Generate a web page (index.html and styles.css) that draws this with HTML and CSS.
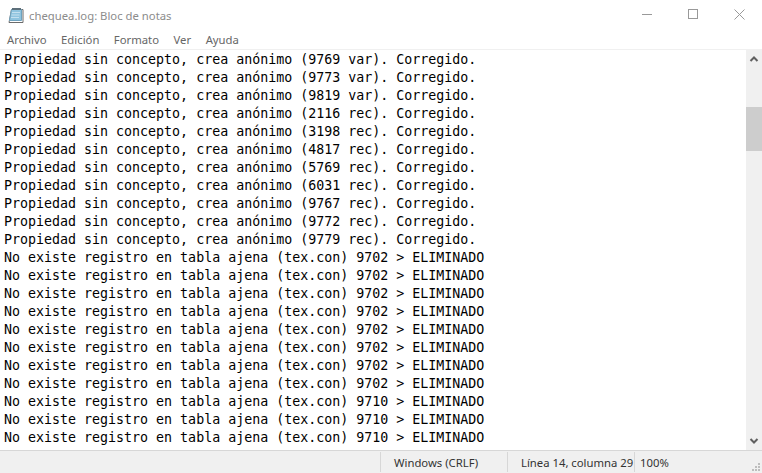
FILE: index.html
```html
<!DOCTYPE html>
<html lang="es">
<head>
<meta charset="utf-8">
<title>chequea.log: Bloc de notas</title>
<link rel="stylesheet" href="styles.css">
</head>
<body>
<div class="window">
  <header class="titlebar">
    <svg class="app-icon" width="16" height="17" viewBox="0 0 16 17">
      <path d="M3.500 2.500h11.500v13H1z" fill="#fff" stroke="#6b6b6b" stroke-width="1"/>
      <path d="M3.500 2.500h10v11H1.500z" fill="#8fc4df" stroke="#6fa3bf" stroke-width="1"/>
      <path d="M4 1h9v2H4z" fill="#5d6f7a"/>
      <path d="M4 5.500h8M3.500 8h8M3 10.500h8" stroke="#c3e0ef"/>
    </svg>
    <span class="title">chequea.log: Bloc de notas</span>
    <div class="controls">
      <span class="ctl"><svg width="10" height="10" viewBox="0 0 10 10"><path d="M0 5.500h10" stroke="#999"/></svg></span>
      <span class="ctl"><svg width="10" height="10" viewBox="0 0 10 10"><rect x=".5" y=".5" width="9" height="9" fill="none" stroke="#999"/></svg></span>
      <span class="ctl"><svg width="11" height="11" viewBox="0 0 11 11"><path d="M.5.5l10 10M10.500.5l-10 10" stroke="#999" fill="none"/></svg></span>
    </div>
  </header>
  <nav class="menubar">
    <span>Archivo</span><span>Edición</span><span>Formato</span><span>Ver</span><span>Ayuda</span>
  </nav>
  <main class="editor">
    <pre class="text">Propiedad sin concepto, crea anónimo (9769 var). Corregido.
Propiedad sin concepto, crea anónimo (9773 var). Corregido.
Propiedad sin concepto, crea anónimo (9819 var). Corregido.
Propiedad sin concepto, crea anónimo (2116 rec). Corregido.
Propiedad sin concepto, crea anónimo (3198 rec). Corregido.
Propiedad sin concepto, crea anónimo (4817 rec). Corregido.
Propiedad sin concepto, crea anónimo (5769 rec). Corregido.
Propiedad sin concepto, crea anónimo (6031 rec). Corregido.
Propiedad sin concepto, crea anónimo (9767 rec). Corregido.
Propiedad sin concepto, crea anónimo (9772 rec). Corregido.
Propiedad sin concepto, crea anónimo (9779 rec). Corregido.
No existe registro en tabla ajena (tex.con) 9702 &gt; ELIMINADO
No existe registro en tabla ajena (tex.con) 9702 &gt; ELIMINADO
No existe registro en tabla ajena (tex.con) 9702 &gt; ELIMINADO
No existe registro en tabla ajena (tex.con) 9702 &gt; ELIMINADO
No existe registro en tabla ajena (tex.con) 9702 &gt; ELIMINADO
No existe registro en tabla ajena (tex.con) 9702 &gt; ELIMINADO
No existe registro en tabla ajena (tex.con) 9702 &gt; ELIMINADO
No existe registro en tabla ajena (tex.con) 9702 &gt; ELIMINADO
No existe registro en tabla ajena (tex.con) 9710 &gt; ELIMINADO
No existe registro en tabla ajena (tex.con) 9710 &gt; ELIMINADO
No existe registro en tabla ajena (tex.con) 9710 &gt; ELIMINADO</pre>
    <div class="scrollbar">
      <svg class="arrow" width="16" height="17" viewBox="0 0 16 17"><path d="M4.500 11l3.500-3.500 3.500 3.500" fill="none" stroke="#606060" stroke-width="2"/></svg>
      <div class="track"><div class="thumb"></div></div>
      <svg class="arrow" width="16" height="17" viewBox="0 0 16 17"><path d="M4.500 6l3.500 3.500 3.500-3.500" fill="none" stroke="#606060" stroke-width="2"/></svg>
    </div>
  </main>
  <footer class="statusbar">
    <span class="cell eol">Windows (CRLF)</span>
    <span class="cell pos">Línea 14, columna 29</span>
    <span class="cell zoom">100%</span>
    <svg class="grip" width="10" height="10" viewBox="0 0 10 10"><path d="M7 1h2v2H7zM4 4h2v2H4zM7 4h2v2H7zM1 7h2v2H1zM4 7h2v2H4zM7 7h2v2H7z" fill="#bdbdbd"/></svg>
  </footer>
</div>
</body>
</html>
```
FILE: styles.css
```css
* { box-sizing: border-box; }
html, body { margin: 0; height: 100%; background: #fff; }
.window {
  width: 762px; height: 473px; display: flex; flex-direction: column;
  overflow: hidden; font-family: "Noto Sans", "Open Sans", sans-serif;
}
.titlebar { height: 30px; display: flex; align-items: center; padding-left: 8px; flex: none; position: relative; }
.app-icon { flex: none; }
.title { margin-left: 5px; font-size: 11.300px; color: #8c8c8c; white-space: nowrap; }
.controls { margin-left: auto; display: flex; align-self: flex-start; }
.ctl { width: 46px; height: 28px; display: flex; align-items: center; justify-content: center; }
.menubar {
  height: 19px; flex: none; display: flex; gap: 14.500px; padding-left: 7px;
  font-size: 11.300px; line-height: 20px; color: #666;
}
.editor { flex: 1; min-height: 0; display: flex; border-top: 1px solid #f0f0f0; }
.text {
  flex: 1; margin: 0; padding: 1px 0 0 4px; overflow: hidden;
  font-family: "DejaVu Sans Mono", monospace; font-size: 13.300px; line-height: 18px; color: #000;
}
.scrollbar { width: 16px; flex: none; background: #f0f0f0; display: flex; flex-direction: column; }
.arrow { flex: none; }
.track { flex: 1; padding-top: 40px; }
.thumb { height: 44px; background: #cdcdcd; }
.statusbar {
  height: 23px; flex: none; background: #f0f0f0; border-top: 1px solid #d7d7d7;
  display: flex; align-items: center; padding-left: 380px; font-size: 11.300px; color: #333; position: relative;
}
.cell { height: 20px; display: flex; align-items: center; border-left: 1px solid #d7d7d7; white-space: nowrap; }
.eol { width: 127px; padding-left: 13px; }
.pos { width: 127px; padding-left: 13px; }
.zoom { padding-left: 5px; }
.grip { position: absolute; right: 1px; bottom: 1px; }
```
